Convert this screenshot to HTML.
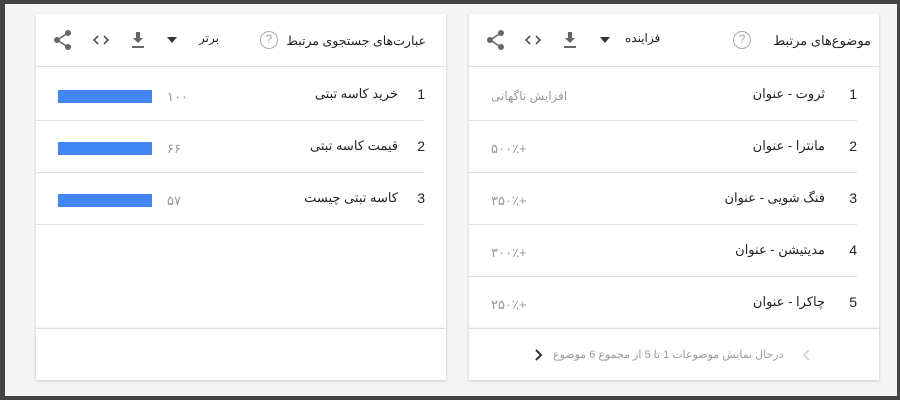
<!DOCTYPE html>
<html><head><meta charset="utf-8"><style>
*{margin:0;padding:0;box-sizing:border-box}
body{width:900px;height:400px;background:#444;font-family:"Liberation Sans","Noto Sans CJK SC",sans-serif;position:relative;overflow:hidden}
.bg{position:absolute;left:5px;top:4px;width:892px;height:392px;background:#f5f5f5}
.card{position:absolute;top:14px;width:410px;height:366px;background:#fff;box-shadow:0 1px 3px rgba(0,0,0,.18)}
.hdr{position:absolute;left:0;top:0;width:100%;height:53px;border-bottom:1px solid #e0e0e0}
.t{position:absolute;font-size:14px;color:#222;white-space:nowrap;direction:rtl}
.g{color:#999;font-size:13px}
.line{position:absolute;height:1px;background:#e0e0e0}
.bar{position:absolute;height:13px;background:#4285f4}
.q{position:absolute;width:18px;height:18px;border:1.5px solid #aaa;border-radius:50%;color:#aaa;font-size:12px;text-align:center;line-height:15px}
.foot{position:absolute;left:0;top:314px;width:100%;height:52px;border-top:1px solid #ddd;box-shadow:0 -1px 2px rgba(0,0,0,.06)}
</style></head><body>
<div class="bg"></div>

<!-- right card -->
<div class="card" style="left:469px">
 <div class="hdr">
  <div class="t" style="right:8px;top:19px;font-size:13px">موضوع‌های مرتبط</div>
  <div class="q" style="left:264px;top:17px">?</div>
  <div class="t" style="left:156px;top:17px;font-size:12px">فزاینده</div>
  <svg style="position:absolute;left:130px;top:22px" width="12" height="8"><path d="M1 1h10L6 7z" fill="#333"/></svg>
  <svg style="position:absolute;left:93px;top:17px" width="16" height="18"><path d="M6 1h4v6h3l-5 5-5-5h3z M2 15h12v2H2z" fill="#666"/></svg>
  <svg style="position:absolute;left:55px;top:19px" width="18" height="14"><path d="M6 3L2 7l4 4M12 3l4 4-4 4" stroke="#555" stroke-width="1.6" fill="none"/></svg>
  <svg style="position:absolute;left:17px;top:15px" width="20" height="22"><circle cx="15" cy="4" r="3" fill="#666"/><circle cx="4" cy="11" r="3" fill="#666"/><circle cx="15" cy="18" r="3" fill="#666"/><path d="M15 4L4 11l11 7" stroke="#666" stroke-width="1.6" fill="none"/></svg>
 </div>
 <div class="t" style="right:22px;top:72px">1</div><div class="t" style="right:54px;top:72px;font-size:13px">ثروت - عنوان</div><div class="t g" style="left:22px;top:75px;font-size:12px">افزایش ناگهانی</div>
 <div class="line" style="left:0;right:22px;top:106px"></div>
 <div class="t" style="right:22px;top:124px">2</div><div class="t" style="right:54px;top:124px;font-size:13px">مانترا - عنوان</div><div class="t g" style="left:22px;top:127px">+۵۰۰٪</div>
 <div class="line" style="left:0;right:22px;top:158px"></div>
 <div class="t" style="right:22px;top:176px">3</div><div class="t" style="right:54px;top:176px;font-size:13px">فنگ شویی - عنوان</div><div class="t g" style="left:22px;top:179px">+۳۵۰٪</div>
 <div class="line" style="left:0;right:22px;top:210px"></div>
 <div class="t" style="right:22px;top:228px">4</div><div class="t" style="right:54px;top:228px;font-size:13px">مدیتیشن - عنوان</div><div class="t g" style="left:22px;top:231px">+۳۰۰٪</div>
 <div class="line" style="left:0;right:22px;top:262px"></div>
 <div class="t" style="right:22px;top:280px">5</div><div class="t" style="right:54px;top:280px;font-size:13px">چاکرا - عنوان</div><div class="t g" style="left:22px;top:283px">+۲۵۰٪</div>
 <div class="foot">
  <div class="t g" style="left:84px;top:19px;font-size:11px">درحال نمایش موضوعات 1 تا 5 از مجموع 6 موضوع</div>
  <svg style="position:absolute;left:333px;top:20px" width="10" height="12"><path d="M7 1L2 6l5 5" stroke="#ccc" stroke-width="1.5" fill="none"/></svg>
  <svg style="position:absolute;left:64px;top:20px" width="10" height="12"><path d="M3 1l5 5-5 5" stroke="#333" stroke-width="2" fill="none"/></svg>
 </div>
</div>

<!-- left card -->
<div class="card" style="left:36px">
 <div class="hdr">
  <div class="t" style="right:20px;top:19px;font-size:12.5px">عبارت‌های جستجوی مرتبط</div>
  <div class="q" style="left:224px;top:17px">?</div>
  <div class="t" style="left:163px;top:17px;font-size:12px">برتر</div>
  <svg style="position:absolute;left:130px;top:22px" width="12" height="8"><path d="M1 1h10L6 7z" fill="#333"/></svg>
  <svg style="position:absolute;left:94px;top:17px" width="16" height="18"><path d="M6 1h4v6h3l-5 5-5-5h3z M2 15h12v2H2z" fill="#666"/></svg>
  <svg style="position:absolute;left:56px;top:19px" width="18" height="14"><path d="M6 3L2 7l4 4M12 3l4 4-4 4" stroke="#555" stroke-width="1.6" fill="none"/></svg>
  <svg style="position:absolute;left:17px;top:15px" width="20" height="22"><circle cx="15" cy="4" r="3" fill="#666"/><circle cx="4" cy="11" r="3" fill="#666"/><circle cx="15" cy="18" r="3" fill="#666"/><path d="M15 4L4 11l11 7" stroke="#666" stroke-width="1.6" fill="none"/></svg>
 </div>
 <div class="t" style="right:21px;top:72px">1</div><div class="t" style="right:48px;top:72px;font-size:13px">خرید کاسه تبتی</div><div class="t g" style="left:131px;top:75px">۱۰۰</div><div class="bar" style="left:22px;top:76px;width:94px"></div>
 <div class="line" style="left:0;right:22px;top:106px"></div>
 <div class="t" style="right:21px;top:124px">2</div><div class="t" style="right:48px;top:124px;font-size:13px">قیمت کاسه تبتی</div><div class="t g" style="left:131px;top:127px">۶۶</div><div class="bar" style="left:22px;top:128px;width:94px"></div>
 <div class="line" style="left:0;right:22px;top:158px"></div>
 <div class="t" style="right:21px;top:176px">3</div><div class="t" style="right:48px;top:176px;font-size:13px">کاسه تبتی چیست</div><div class="t g" style="left:131px;top:179px">۵۷</div><div class="bar" style="left:22px;top:180px;width:94px"></div>
 <div class="line" style="left:0;right:22px;top:210px"></div>
 <div class="foot"></div>
</div>
</body></html>
